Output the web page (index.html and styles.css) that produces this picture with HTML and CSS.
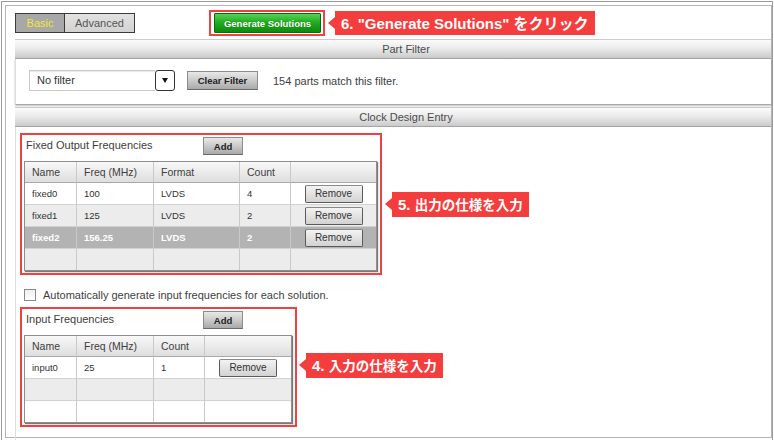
FILE: index.html
```html
<!DOCTYPE html>
<html lang="en">
<head>
  <meta charset="UTF-8" />
  <title>Clock Design</title>
  <link rel="stylesheet" href="styles.css">
</head>
<body>
  <div class="frame">
    <div class="inner">
      <div class="topbar">
        <div class="tabs">
          <span class="tab tab-on">Basic</span>
          <span class="tab">Advanced</span>
        </div>
        <div class="hl gen-box">
          <button class="btn-green">Generate Solutions</button>
        </div>
        <div class="callout callout-gen">6. "Generate Solutions" <span class="jp">をクリック</span></div>
      </div>

      <div class="panel">
        <div class="panel-head">Part Filter</div>
        <div class="panel-body filter-body">
          <div class="select">
            <span class="select-text">No filter</span>
            <span class="select-arrow"></span>
          </div>
          <button class="btn btn-clear">Clear Filter</button>
          <span class="match">154 parts match this filter.</span>
        </div>
      </div>

      <div class="panel panel-clock">
        <div class="panel-head">Clock Design Entry</div>
        <div class="panel-body entry-body">

          <div class="entry-row">
            <div class="hl box">
              <div class="box-head">
                <span class="box-title">Fixed Output Frequencies</span>
                <button class="btn btn-add">Add</button>
              </div>
              <table class="grid grid-out">
                <colgroup>
                  <col style="width:52px"><col style="width:77px"><col style="width:86px"><col style="width:51px"><col>
                </colgroup>
                <tr class="head"><th>Name</th><th>Freq (MHz)</th><th>Format</th><th>Count</th><th></th></tr>
                <tr><td>fixed0</td><td>100</td><td>LVDS</td><td>4</td><td class="act"><button class="btn-remove">Remove</button></td></tr>
                <tr class="alt"><td>fixed1</td><td>125</td><td>LVDS</td><td>2</td><td class="act"><button class="btn-remove">Remove</button></td></tr>
                <tr class="sel"><td>fixed2</td><td>156.25</td><td>LVDS</td><td>2</td><td class="act"><button class="btn-remove">Remove</button></td></tr>
                <tr class="alt last"><td></td><td></td><td></td><td></td><td></td></tr>
              </table>
            </div>
            <div class="callout callout-out">5. <span class="jp">出力の仕様を入力</span></div>
          </div>

          <div class="auto-row">
            <span class="check"></span>
            <span>Automatically generate input frequencies for each solution.</span>
          </div>

          <div class="entry-row">
            <div class="hl box">
              <div class="box-head">
                <span class="box-title">Input Frequencies</span>
                <button class="btn btn-add">Add</button>
              </div>
              <table class="grid grid-in">
                <colgroup>
                  <col style="width:52px"><col style="width:77px"><col style="width:51px"><col>
                </colgroup>
                <tr class="head"><th>Name</th><th>Freq (MHz)</th><th>Count</th><th></th></tr>
                <tr><td>input0</td><td>25</td><td>1</td><td class="act"><button class="btn-remove">Remove</button></td></tr>
                <tr class="alt"><td></td><td></td><td></td><td></td></tr>
                <tr class="last"><td></td><td></td><td></td><td></td></tr>
              </table>
            </div>
            <div class="callout callout-in">4. <span class="jp">入力の仕様を入力</span></div>
          </div>

        </div>
      </div>
    </div>
  </div>
</body>
</html>
```

FILE: styles.css
```css
body {
  margin: 0;
  font-family: "Liberation Sans", Arial, sans-serif;
  background: #fff;
  color: #444;
}
button {
  font-family: "Liberation Sans", Arial, sans-serif;
  padding: 0;
  cursor: pointer;
}
.frame {
  margin: 1px 0 0 1px;
  width: 772px;
  height: 439px;
  box-sizing: border-box;
  border: 1px solid #9c9c9c;
  border-bottom: 0;
  padding: 3px 0 0 3px;
}
.inner {
  width: 767px;
  height: 433px;
  box-sizing: border-box;
  border: 1px solid #b4b4b4;
  padding: 4px 0 0 9px;
}

/* top bar */
.topbar {
  display: flex;
  align-items: center;
  height: 26px;
  margin-bottom: 3px;
}
.tabs {
  display: flex;
  height: 20px;
}
.tab {
  box-sizing: border-box;
  height: 20px;
  width: 70px;
  border: 1px solid #3a3a3a;
  border-left: 0;
  background: linear-gradient(#e2e2e2, #d2d2d2);
  color: #555;
  font-size: 11px;
  line-height: 18px;
  text-align: center;
}
.tab-on {
  width: 50px;
  border-left: 1px solid #3a3a3a;
  background: #a8a8a8;
  color: #f6e532;
}
.hl {
  border: 2px solid #f2403f;
}
.gen-box {
  margin-left: 74px;
  padding: 1px 2px 1px 3px;
  display: flex;
}
.btn-green {
  width: 107px;
  height: 20px;
  border: 1px solid #0d670d;
  border-radius: 1px;
  background: linear-gradient(#5ad25a, #21ad21 45%, #0b8c0b);
  color: #fff;
  font-size: 9.5px;
  font-weight: bold;
  text-shadow: 0 0 1px rgba(0, 0, 0, 0.35);
}

/* callouts */
.callout {
  position: relative;
  margin-left: 10px;
  height: 24px;
  line-height: 24px;
  padding: 0 6px;
  background: #f43d3d;
  color: #fff;
  font-size: 15px;
  font-weight: bold;
  white-space: nowrap;
}
.callout::before {
  content: "";
  position: absolute;
  left: -7px;
  top: 6px;
  border-right: 7px solid #f43d3d;
  border-top: 6px solid transparent;
  border-bottom: 6px solid transparent;
}
.jp {
  font-family: "Noto Sans CJK JP", sans-serif;
}
.callout-out .jp,
.callout-in .jp {
  font-size: 13.5px;
}
.callout-out {
  margin-top: 59px;
  height: 25px;
  line-height: 25px;
}
.callout-in {
  margin-top: 46px;
  margin-left: 9px;
  height: 25px;
  line-height: 25px;
}

/* panels */
.panel-head {
  box-sizing: border-box;
  height: 20px;
  line-height: 18px;
  padding-left: 26px;
  border-top: 1px solid #cbcbcb;
  border-bottom: 1px solid #a4a4a4;
  background: linear-gradient(#fbfbfb, #ebebeb 45%, #cbcbcb);
  text-align: center;
  font-size: 11px;
  color: #4b4b4b;
}
.panel-body {
  border-left: 1px solid #dedede;
}
.filter-body {
  display: flex;
  align-items: center;
  padding: 11px 0 13px 13px;
  border-bottom: 1px solid #a8a8a8;
  box-shadow: 0 1px 2px rgba(0, 0, 0, 0.25);
}
.select {
  display: flex;
  width: 146px;
  height: 21px;
}
.select-text {
  flex: 1;
  border: 1px solid #cacaca;
  border-right: 0;
  box-shadow: inset 0 1px 1px #e8e8e8;
  padding-left: 7px;
  font-size: 11px;
  line-height: 19px;
  color: #333;
}
.select-arrow {
  box-sizing: border-box;
  width: 20px;
  border: 1px solid #333;
  border-radius: 3px;
  display: flex;
  align-items: center;
  justify-content: center;
  background: #fff;
}
.select-arrow::after {
  content: "";
  width: 0;
  height: 0;
  border-top: 5px solid #111;
  border-left: 3px solid transparent;
  border-right: 3px solid transparent;
}
.btn {
  box-sizing: border-box;
  height: 19px;
  border: 1px solid #8c8c8c;
  border-bottom-color: #6a6a6a;
  background: linear-gradient(#e8e8e8, #cacaca 50%, #a9a9a9);
  color: #222;
  font-size: 9.5px;
  font-weight: bold;
}
.btn-clear {
  width: 71px;
  margin-left: 12px;
}
.match {
  margin-left: 15px;
  font-size: 11px;
  color: #3e3e3e;
}

.panel-clock {
  margin-top: 2px;
}
.entry-body {
  padding: 6px 0 0 4px;
  height: 310px;
}
.entry-row {
  display: flex;
  align-items: flex-start;
}
.box {
  padding: 2px 3px 2px 2px;
}
.box-head {
  display: flex;
  align-items: center;
  height: 18px;
  margin-bottom: 6px;
}
.box-title {
  width: 177px;
  padding-left: 2px;
  padding-bottom: 2px;
  font-size: 11px;
  color: #3e3e3e;
}
.btn-add {
  width: 40px;
  height: 18px;
}

.auto-row {
  display: flex;
  align-items: center;
  height: 12px;
  margin: 14px 0 6px 4px;
  font-size: 11px;
  color: #3e3e3e;
}
.check {
  box-sizing: border-box;
  width: 12px;
  height: 12px;
  margin-right: 7px;
  border: 1px solid #8a8a8a;
  background: linear-gradient(#f0f0f0, #fff);
}

/* tables */
.grid {
  table-layout: fixed;
  border-collapse: separate;
  border-spacing: 0;
  border: 1px solid #8e8e8e;
  box-shadow: 1px 1px 1px #7a7a7a;
}
.grid-out {
  width: 353px;
}
.grid-in {
  width: 268px;
}
.grid tr {
  height: 22px;
}
.grid tr.head {
  height: 21px;
}
.grid tr.last {
  height: 21px;
}
.grid th,
.grid td {
  padding: 0 7px;
  border-right: 1px solid #c9c9c9;
  border-bottom: 1px solid #d2d2d2;
  text-align: left;
  white-space: nowrap;
}
.grid th:last-child,
.grid td:last-child {
  border-right: 0;
}
.grid tr.last td {
  border-bottom: 0;
}
.grid th {
  background: linear-gradient(#f8f8f8, #dedede);
  border-bottom-color: #a9a9a9;
  font-weight: normal;
  font-size: 10.5px;
  color: #3e3e3e;
}
.grid td {
  font-size: 9.5px;
  color: #333;
  background: #fff;
}
.grid tr.alt td {
  background: #ececec;
}
.grid tr.sel td {
  background: #b3b3b3;
  color: #fff;
  font-weight: bold;
}
.grid td.act {
  text-align: center;
  padding: 0;
}
.btn-remove {
  width: 58px;
  height: 18px;
  border: 1px solid #5a5a5a;
  border-top-color: #8a8a8a;
  border-radius: 2px;
  background: linear-gradient(#f3f3f3, #d2d2d2);
  color: #333;
  font-size: 10px;
  vertical-align: middle;
}
```
